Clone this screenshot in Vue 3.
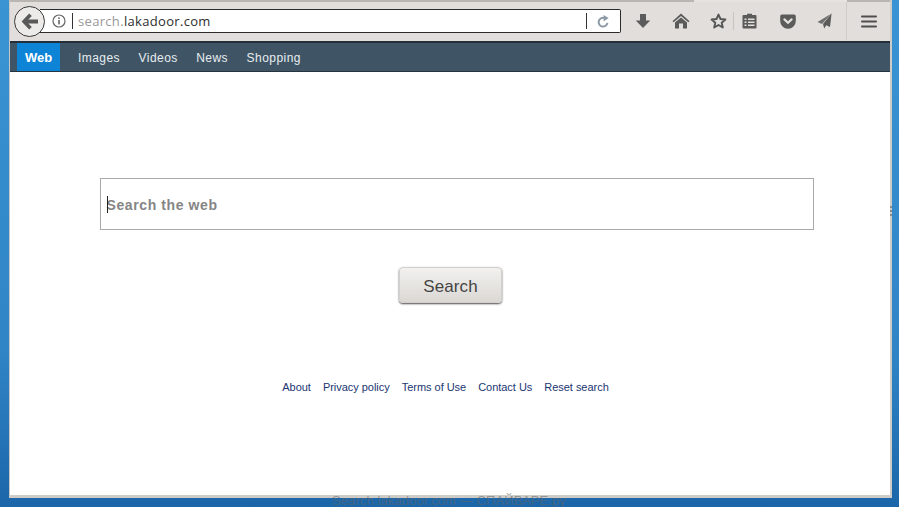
<script setup>
const tabs = ['Images', 'Videos', 'News', 'Shopping']
const links = ['About', 'Privacy policy', 'Terms of Use', 'Contact Us', 'Reset search']
</script>

<template>
  <div class="desktop">
    <div class="window">
      <header class="toolbar">
        <span class="tab-gap"></span>
        <div class="back">
          <svg width="18" height="17" viewBox="0 0 18 17"><path d="M8.2 0.6 L0.6 8.5 L8.2 16.4 L10.8 14 L7.4 10.4 H17 V6.6 H7.4 L10.8 3 Z" fill="#595959"/></svg>
        </div>
        <div class="urlbar">
          <svg class="info" width="14" height="14" viewBox="0 0 14 14"><circle cx="7" cy="7" r="6" fill="none" stroke="#666" stroke-width="1.2"/><rect x="6.2" y="6" width="1.6" height="4.4" fill="#666"/><rect x="6.2" y="3.4" width="1.6" height="1.6" fill="#666"/></svg>
          <span class="sep"></span>
          <span class="url"><span class="dim">search.</span>lakadoor.com</span>
          <span class="sep end"></span>
          <svg class="reload" width="13" height="13" viewBox="0 0 13 13"><path d="M10.4 7.8 A4.4 4.4 0 1 1 7 2.9" fill="none" stroke="#8d9aa5" stroke-width="2"/><path d="M6.6 0 L11.6 3 L6.6 6.4 Z" fill="#8d9aa5"/></svg>
        </div>
        <div class="icons">
          <svg class="i-down" width="16" height="16" viewBox="0 0 16 16"><path d="M5 1 H11 V7.5 H15.2 L8 15 L0.8 7.5 H5 Z" fill="#5b5b5b"/></svg>
          <svg class="i-home" width="18" height="16" viewBox="0 0 18 16"><path d="M9 0.5 L17.5 8.2 L16.3 9.3 L9 3 L1.7 9.3 L0.5 8.2 Z M9 4.6 L15 9.6 V15.5 H11 V10.5 H7 V15.5 H3 V9.6 Z" fill="#5b5b5b"/></svg>
          <svg class="i-star" width="17" height="16" viewBox="0 0 17 16"><path d="M8.5 1.6 L10.5 6 L15.4 6.5 L11.7 9.7 L12.8 14.5 L8.5 12 L4.2 14.5 L5.3 9.7 L1.6 6.5 L6.5 6 Z" fill="none" stroke="#555" stroke-width="1.9" stroke-linejoin="round"/></svg>
          <span class="divider"></span>
          <svg class="i-list" width="15" height="16" viewBox="0 0 15 16"><path d="M5 2 V0.8 H10 V2 H13.5 Q14.5 2 14.5 3 V14.5 Q14.5 15.5 13.5 15.5 H1.5 Q0.5 15.5 0.5 14.5 V3 Q0.5 2 1.5 2 Z" fill="#5b5b5b"/><path d="M2.5 5.5 H4.5 V7 H2.5 Z M6 5.5 H12.5 V7 H6 Z M2.5 8.5 H4.5 V10 H2.5 Z M6 8.5 H12.5 V10 H6 Z M2.5 11.5 H4.5 V13 H2.5 Z M6 11.5 H12.5 V13 H6 Z" fill="#e2dfdc"/></svg>
          <svg class="i-pocket" width="16" height="15" viewBox="0 0 16 15"><path d="M2 0.5 H14 Q15.8 0.5 15.8 2.3 V7 A7.8 7.8 0 0 1 0.2 7 V2.3 Q0.2 0.5 2 0.5 Z" fill="#5b5b5b"/><path d="M4.4 5.4 L8 8.8 L11.6 5.4" fill="none" stroke="#e2dfdc" stroke-width="2.2" stroke-linecap="round"/></svg>
          <svg class="i-send" width="15" height="16" viewBox="0 0 15 16"><path d="M14.6 0.5 L0.5 9 L5 11 Z" fill="#707070"/><path d="M14.6 0.5 L6 11 L7.2 15.5 L9.2 12.2 L13 14 Z" fill="#5b5b5b"/></svg>
          <span class="divider tall"></span>
          <svg class="i-menu" width="16" height="13" viewBox="0 0 16 13"><path d="M1 0.5 H15 Q16 0.5 16 1.5 Q16 2.5 15 2.5 H1 Q0 2.5 0 1.5 Q0 0.5 1 0.5 Z M1 5.5 H15 Q16 5.5 16 6.5 Q16 7.5 15 7.5 H1 Q0 7.5 0 6.5 Q0 5.5 1 5.5 Z M1 10.5 H15 Q16 10.5 16 11.5 Q16 12.5 15 12.5 H1 Q0 12.5 0 11.5 Q0 10.5 1 10.5 Z" fill="#4f4f4f"/></svg>
        </div>
      </header>

      <nav class="nav">
        <span class="tab-web">Web</span>
        <a v-for="t in tabs" :key="t" class="tab">{{ t }}</a>
      </nav>

      <main class="content">
        <div class="search-box">
          <span class="caret"></span>
          <span class="placeholder">Search the web</span>
        </div>
        <button class="search-btn">Search</button>
        <div class="links">
          <a v-for="l in links" :key="l">{{ l }}</a>
        </div>
      </main>
      <span class="grip"></span>
    </div>
    <div class="watermark">Search.lakadoor.com — СПАЙВАРЕ.ру</div>
  </div>
</template>

<style>
html, body { margin: 0; padding: 0; overflow: hidden; }
</style>

<style scoped>
.desktop {
  position: relative;
  width: 899px;
  height: 507px;
  overflow: hidden;
  box-sizing: border-box;
  padding: 0 0 0 9px;
  background: linear-gradient(180deg, #3a94d4 0%, #2f84c6 70%, #1b66a9 100%);
  font-family: "Liberation Sans", sans-serif;
}
.window {
  position: relative;
  width: 883px;
  height: 498px;
  display: flex;
  flex-direction: column;
  box-sizing: border-box;
  border-left: 1px solid #c9c6c3;
  border-right: 2px solid #cfccc8;
  border-bottom: 3px solid #cfccc8;
  background: #fff;
}
.toolbar {
  position: relative;
  height: 43px;
  flex: none;
  box-sizing: border-box;
  display: flex;
  align-items: center;
  padding: 2px 0 0 4px;
  background: #e1dedb;
  border-top: 2px solid #b9b6b2;
  border-bottom: 2px solid #23303b;
}
.tab-gap {
  position: absolute;
  left: 684px;
  top: -2px;
  width: 153px;
  height: 2px;
  background: #e6e3e0;
}
.back {
  width: 31px;
  height: 31px;
  flex: none;
  box-sizing: border-box;
  border: 1px solid #3a3a3a;
  border-radius: 50%;
  background: #ecebe9;
  display: flex;
  align-items: center;
  justify-content: center;
  z-index: 1;
  margin-top: -3px;
}
.urlbar {
  width: 581px;
  height: 24px;
  flex: none;
  margin-left: -5px;
  margin-top: -3px;
  box-sizing: border-box;
  background: #fff;
  border: 1px solid #2b2b2b;
  border-left: 0;
  border-radius: 0 2px 2px 0;
  display: flex;
  align-items: center;
  padding-left: 12px;
}
.info { flex: none; }
.sep {
  width: 1px;
  height: 16px;
  background: #333;
  margin: 0 5px 0 6px;
  flex: none;
}
.sep.end { margin: 0 0 0 auto; }
.url {
  font-family: "Open Sans", "DejaVu Sans", sans-serif;
  font-size: 13px;
  color: #2e2e2e;
  letter-spacing: 0.32px;
}
.dim { color: #999; }
.reload { margin: 0 10px 0 10px; flex: none; }
.icons {
  flex: 1;
  display: flex;
  align-items: center;
  height: 100%;
  margin-top: -3px;
}
.i-down { margin-left: 14px; }
.i-home { margin-left: 21px; }
.i-star { margin-left: 20px; }
.divider {
  width: 1px;
  height: 18px;
  background: #c8c5c1;
  margin-left: 6px;
}
.divider.tall { height: 38px; margin-left: 14px; background: #d0cdc9; }
.i-list { margin-left: 8px; }
.i-pocket { margin-left: 23px; }
.i-send { margin-left: 21px; }
.i-menu { margin-left: 14px; }
.nav {
  height: 29px;
  flex: none;
  box-sizing: border-box;
  display: flex;
  align-items: stretch;
  padding-left: 7px;
  background: #3f5566;
  border-bottom: 1px solid #26343f;
  font-size: 12px;
  letter-spacing: 0.45px;
  color: #e8edf0;
}
.tab-web {
  width: 43px;
  background: #0d84d6;
  color: #fff;
  font-weight: 700;
  font-size: 13px;
  letter-spacing: 0;
  display: flex;
  align-items: center;
  justify-content: center;
  margin-right: 18px;
}
.tab {
  display: flex;
  align-items: center;
  padding-top: 1px;
  margin-right: 18.5px;
}
.content {
  flex: 1;
  display: flex;
  flex-direction: column;
  align-items: center;
  padding-top: 106px;
}
.search-box {
  width: 714px;
  height: 52px;
  flex: none;
  box-sizing: border-box;
  margin-left: 13px;
  border: 1px solid #a9a9a9;
  display: flex;
  align-items: center;
  padding: 2px 0 0 6px;
  position: relative;
}
.caret {
  position: absolute;
  left: 6px;
  top: 17px;
  width: 1px;
  height: 17px;
  background: #222;
}
.placeholder {
  font-size: 14px;
  font-weight: 700;
  color: #858585;
  letter-spacing: 0.6px;
}
.search-btn {
  width: 103px;
  height: 36px;
  flex: none;
  margin-top: 37px;
  margin-left: 1px;
  padding: 3px 0 0;
  border: 1px solid #d2cfcc;
  border-radius: 4px;
  background: linear-gradient(180deg, #f2f1ef 0%, #dbd8d4 100%);
  box-shadow: 0 1px 2px rgba(0, 0, 0, 0.7);
  font-family: "Liberation Sans", sans-serif;
  font-size: 17px;
  letter-spacing: 0.1px;
  color: #444;
}
.links {
  display: flex;
  gap: 12px;
  margin-top: 78px;
  margin-right: 9px;
  font-size: 11px;
  letter-spacing: -0.03px;
  line-height: 13px;
  color: #1a3672;
}
.grip {
  position: absolute;
  right: -2px;
  top: 206px;
  width: 2px;
  height: 10px;
  background: repeating-linear-gradient(180deg, #8b8b8b 0 2px, transparent 2px 4px);
}
.watermark {
  position: absolute;
  left: 332px;
  top: 493px;
  font-size: 13px;
  letter-spacing: 0.1px;
  color: rgba(100, 100, 100, 0.55);
  white-space: nowrap;
}
</style>
